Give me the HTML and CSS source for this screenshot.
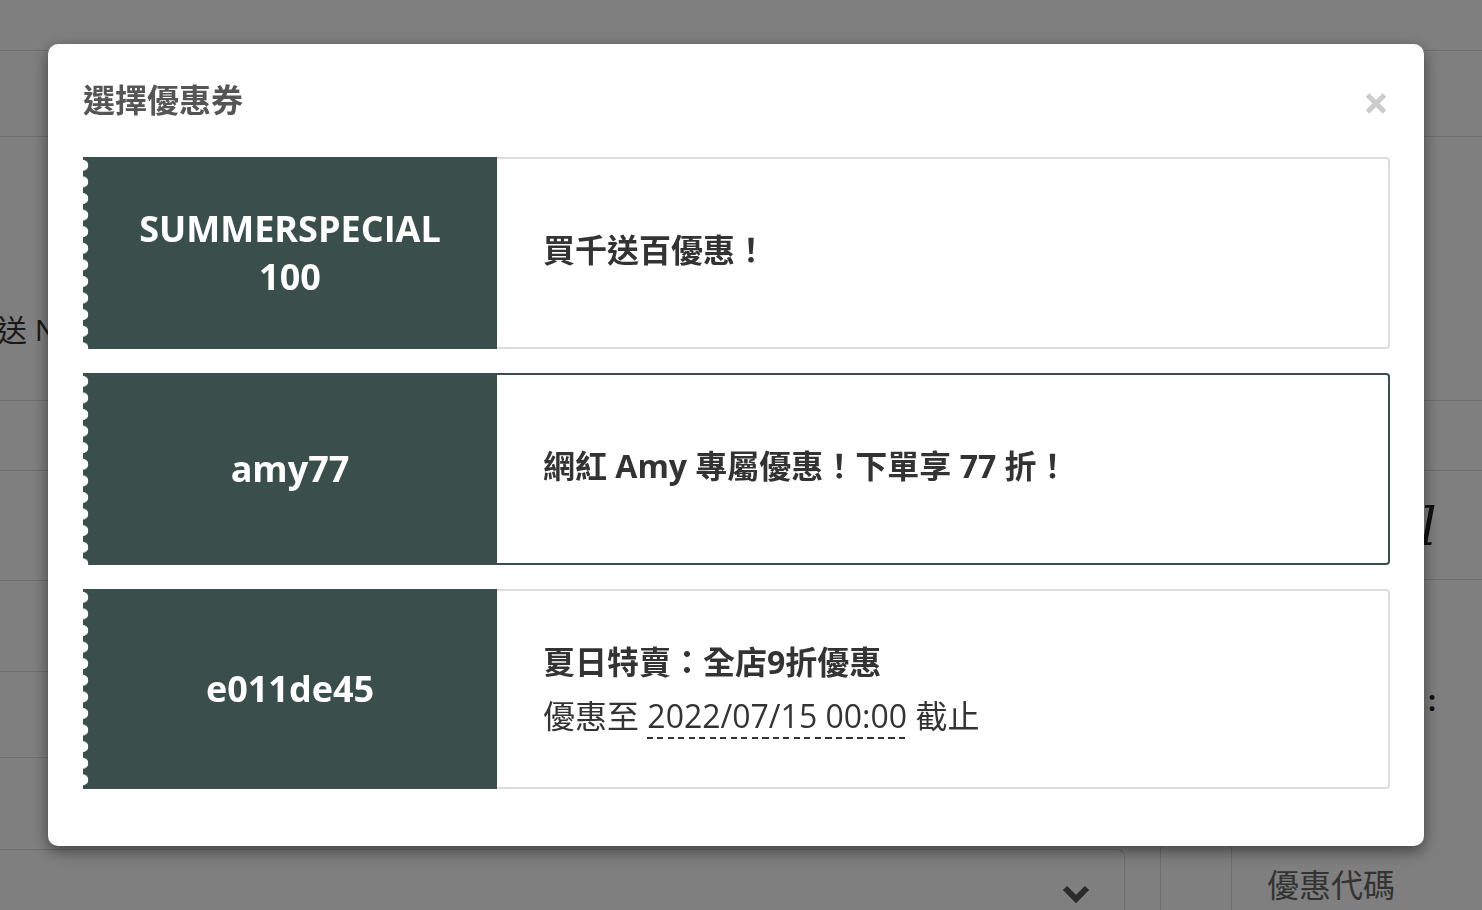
FILE: index.html
```html
<!DOCTYPE html>
<html lang="zh-Hant">
<head>
<meta charset="utf-8">
<title>選擇優惠券</title>
<link rel="stylesheet" href="styles.css">
</head>
<body>
<div class="page">
  <div class="topbar"></div>
  <div class="nav"></div>
  <div class="columns">
    <div class="lcol">
      <div class="row r1"><span class="ship">配送 NT$ 100</span></div>
      <div class="row r2"></div>
      <div class="row r3"></div>
      <div class="row r4"></div>
      <div class="row r5"></div>
      <div class="row r6 last"></div>
    </div>
    <div class="rcol">
      <div class="row r1"></div>
      <div class="row r2"></div>
      <div class="row r3b"><span class="script">l</span></div>
      <div class="r4b"><span class="colon">:</span></div>
    </div>
  </div>
  <div class="bottom">
    <div class="select">
      <svg class="chev" width="28" height="18" viewBox="0 0 28 18"><polyline points="3,3 14,14 25,3" fill="none" stroke="#555" stroke-width="6"/></svg>
    </div>
    <div class="gap"></div>
    <div class="cell"></div>
    <div class="label">優惠代碼</div>
  </div>
</div>

<div class="overlay">
  <div class="modal">
    <div class="modal-head">
      <h2 class="title">選擇優惠券</h2>
      <svg class="close" width="22" height="23" viewBox="0 0 22 23"><path d="M2.5 3 L19.5 20 M19.5 3 L2.5 20" stroke="#cccccc" stroke-width="5" fill="none"/></svg>
    </div>
    <div class="coupon">
      <div class="code">SUMMERSPECIAL<br>100</div>
      <div class="info single"><div class="info-title">買千送百優惠！</div></div>
    </div>
    <div class="coupon active">
      <div class="code">amy77</div>
      <div class="info single"><div class="info-title">網紅 Amy 專屬優惠！下單享 77 折！</div></div>
    </div>
    <div class="coupon last">
      <div class="code">e011de45</div>
      <div class="info">
        <div class="info-title">夏日特賣：全店9折優惠</div>
        <div class="info-date">優惠至 <span class="date">2022/07/15 00:00</span> 截止</div>
      </div>
    </div>
  </div>
</div>
</body>
</html>
```

FILE: styles.css
```css
* { box-sizing: border-box; }
html, body { margin: 0; padding: 0; }
body {
  width: 1482px;
  height: 910px;
  overflow: hidden;
  background: #fff;
  color: #333;
  font-family: "Open Sans", "Noto Sans CJK TC", sans-serif;
}

/* background page */
.page { width: 1482px; }
.topbar { height: 51px; border-bottom: 1px solid #dcdcdc; }
.nav { height: 86px; border-bottom: 1px solid #dcdcdc; }
.columns { display: grid; grid-template-columns: 1140px 1fr; }
.row { border-bottom: 1px solid #dcdcdc; }
.r1 { height: 264px; padding-top: 173px; }
.r2 { height: 70px; }
.r3 { height: 110px; }
.r4 { height: 91px; }
.r5 { height: 86px; }
.r6 { height: 91px; }
.row.last { border-bottom: none; }
.r3b { height: 109px; padding: 26px 0 0 280px; }
.r4b { padding: 100px 0 0 288px; }
.ship {
  display: block;
  margin-left: -33px;
  font-size: 30px;
  line-height: 40px;
  color: #333;
  white-space: nowrap;
}
.script {
  font-family: "DejaVu Serif", serif;
  font-style: italic;
  font-size: 52px;
  line-height: 60px;
  color: #222;
}
.colon { font-size: 28px; font-weight: 700; color: #222; line-height: 40px; }

.bottom { display: flex; height: 80px; }
.select {
  width: 1134px;
  margin-left: -9px;
  height: 80px;
  border: 1px solid #dcdcdc;
  border-bottom: none;
  border-radius: 0 8px 0 0;
  display: flex;
  justify-content: flex-end;
  align-items: flex-start;
  padding: 35px 34px 0 0;
}
.gap { width: 35px; }
.cell { width: 72px; border-left: 1px solid #dcdcdc; border-right: 1px solid #dcdcdc; margin-top: -200px; }
.label {
  padding: 12px 0 0 35px;
  font-size: 32px;
  line-height: 48px;
  color: #666;
  white-space: nowrap;
}

/* modal */
.overlay {
  position: fixed;
  inset: 0;
  background: rgba(0, 0, 0, 0.5);
  padding: 44px 58px 0 48px;
}
.modal {
  background: #fff;
  border-radius: 10px;
  box-shadow: 0 5px 15px rgba(0, 0, 0, 0.5);
  padding: 32px 34px 57px 35px;
}
.modal-head {
  display: flex;
  justify-content: space-between;
  align-items: flex-start;
  margin-bottom: 33px;
}
.title {
  margin: 0;
  font-size: 32px;
  line-height: 48px;
  font-weight: 700;
  color: #555;
}
.close { display: block; margin: 16px 3px 0 0; }

.coupon {
  display: flex;
  min-height: 192px;
  margin-bottom: 24px;
}
.coupon.last { margin-bottom: 0; }
.code {
  flex: 0 0 414px;
  display: flex;
  align-items: center;
  justify-content: center;
  text-align: center;
  padding: 48px 20px;
  color: #fff;
  font-weight: 700;
  font-size: 36px;
  line-height: 48px;
  background:
    radial-gradient(circle at 0 50%, #fff 5px, rgba(255,255,255,0) 5.6px) 0 0 / 12px 16.6px repeat-y,
    #3a4f4b;
}
.info {
  flex: 1;
  display: flex;
  flex-direction: column;
  justify-content: center;
  padding: 44px 46px;
  border: 2px solid #dddddd;
  border-left: none;
  border-radius: 0 4px 4px 0;
  font-size: 32px;
  line-height: 54px;
  color: #333;
}
.info.single { padding-bottom: 50px; }
.coupon.active .info { border-color: #3a4f4b; }
.info-title { font-weight: 700; }
.date {
  padding-bottom: 2px;
  background: repeating-linear-gradient(90deg, #333 0 6px, rgba(0,0,0,0) 6px 10.5px) left bottom / 100% 2px no-repeat;
}
```
